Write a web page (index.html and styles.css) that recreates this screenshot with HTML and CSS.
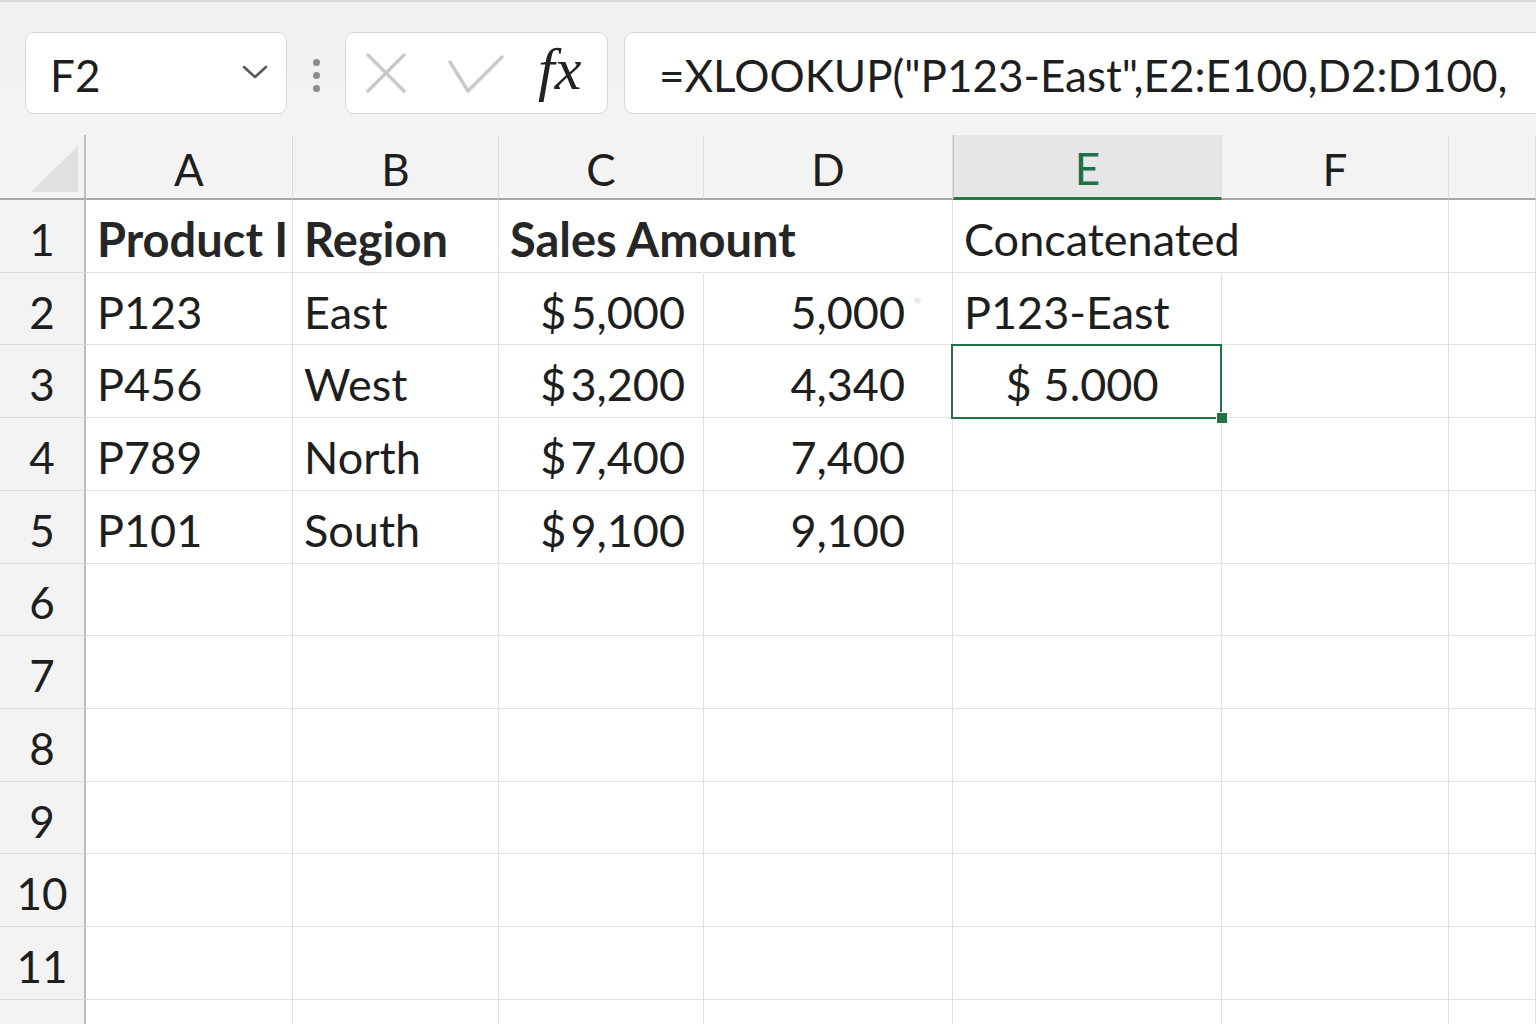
FILE: index.html
```html
<!DOCTYPE html>
<html>
<head>
<meta charset="utf-8">
<link rel="stylesheet" href="styles.css">
</head>
<body>
<div class="top">
  <div class="namebox">
    <span class="nbtext">F2</span>
    <svg class="chev" width="26" height="16" viewBox="0 0 26 16"><path d="M2 3 L13 13 L24 3" fill="none" stroke="#5a5a5a" stroke-width="2.6" stroke-linecap="round" stroke-linejoin="round"/></svg>
  </div>
  <div class="dots"><i></i><i></i><i></i></div>
  <div class="fxbox">
    <svg class="ic-x" width="40" height="40" viewBox="0 0 40 40"><path d="M2 2 L38 38 M38 2 L2 38" fill="none" stroke="#c9c9c9" stroke-width="3.4" stroke-linecap="round"/></svg>
    <svg class="ic-ok" width="56" height="38" viewBox="0 0 56 38"><path d="M2 7 L20 36 L54 2" fill="none" stroke="#c9c9c9" stroke-width="3.4" stroke-linecap="round" stroke-linejoin="round"/></svg>
    <span class="fx">fx</span>
  </div>
  <div class="formula">=XLOOKUP("P123-East",E2:E100,D2:D100,</div>
</div>
<div class="sheet">
  <div class="corner"><div class="tri"></div></div>
  <div class="ch">A</div>
  <div class="ch">B</div>
  <div class="ch">C</div>
  <div class="ch">D</div>
  <div class="ch chsel">E</div>
  <div class="ch">F</div>
  <div class="ch"></div>

  <div class="rh">1</div>
  <div class="c b">Product I</div>
  <div class="c b">Region</div>
  <div class="c b ov">Sales Amount</div>
  <div class="c"></div>
  <div class="c ov">Concatenated</div>
  <div class="c"></div>
  <div class="c"></div>

  <div class="rh">2</div>
  <div class="c">P123</div>
  <div class="c">East</div>
  <div class="c num"><span class="dl">$</span>5,000</div>
  <div class="c numd">5,000<span class="mark"></span></div>
  <div class="c">P123-East</div>
  <div class="c"></div>
  <div class="c"></div>

  <div class="rh">3</div>
  <div class="c">P456</div>
  <div class="c">West</div>
  <div class="c num"><span class="dl">$</span>3,200</div>
  <div class="c numd">4,340</div>
  <div class="c sel"><span class="dl2">$</span>5.000<span class="handle"></span></div>
  <div class="c"></div>
  <div class="c"></div>

  <div class="rh">4</div>
  <div class="c">P789</div>
  <div class="c">North</div>
  <div class="c num"><span class="dl">$</span>7,400</div>
  <div class="c numd">7,400</div>
  <div class="c"></div>
  <div class="c"></div>
  <div class="c"></div>

  <div class="rh">5</div>
  <div class="c">P101</div>
  <div class="c">South</div>
  <div class="c num"><span class="dl">$</span>9,100</div>
  <div class="c numd">9,100</div>
  <div class="c"></div>
  <div class="c"></div>
  <div class="c"></div>

  <div class="rh">6</div>
  <div class="c"></div><div class="c"></div><div class="c"></div><div class="c"></div><div class="c"></div><div class="c"></div><div class="c"></div>
  <div class="rh">7</div>
  <div class="c"></div><div class="c"></div><div class="c"></div><div class="c"></div><div class="c"></div><div class="c"></div><div class="c"></div>
  <div class="rh">8</div>
  <div class="c"></div><div class="c"></div><div class="c"></div><div class="c"></div><div class="c"></div><div class="c"></div><div class="c"></div>
  <div class="rh">9</div>
  <div class="c"></div><div class="c"></div><div class="c"></div><div class="c"></div><div class="c"></div><div class="c"></div><div class="c"></div>
  <div class="rh">10</div>
  <div class="c"></div><div class="c"></div><div class="c"></div><div class="c"></div><div class="c"></div><div class="c"></div><div class="c"></div>
  <div class="rh">11</div>
  <div class="c"></div><div class="c"></div><div class="c"></div><div class="c"></div><div class="c"></div><div class="c"></div><div class="c"></div>
  <div class="rh">12</div>
  <div class="c"></div><div class="c"></div><div class="c"></div><div class="c"></div><div class="c"></div><div class="c"></div><div class="c"></div>
</div>
</body>
</html>
```
FILE: styles.css
```css
* { box-sizing: border-box; }
html, body { margin: 0; }
body {
  width: 1536px;
  height: 1024px;
  overflow: hidden;
  background: #f3f3f3;
  font-family: Lato, "Open Sans", sans-serif;
  color: #1e1e1e;
}
.top {
  height: 135px;
  border-top: 2px solid #d9d9d9;
  padding-top: 30px;
  display: flex;
  align-items: flex-start;
  background: linear-gradient(#f0f0f0, #f4f4f4);
}
.namebox {
  flex: none;
  margin-left: 25px;
  width: 262px;
  height: 82px;
  background: #fff;
  border: 1px solid #d6d6d6;
  border-radius: 9px;
  display: flex;
  align-items: center;
  justify-content: space-between;
  padding: 4px 18px 0 24px;
  font-size: 44px;
}
.chev { margin-top: -6px; }
.dots {
  flex: none;
  width: 58px;
  display: flex;
  flex-direction: column;
  align-items: center;
  gap: 6px;
  padding-top: 27px;
}
.dots i {
  display: block;
  width: 7px;
  height: 7px;
  border-radius: 50%;
  background: #8c8c8c;
}
.fxbox {
  flex: none;
  width: 263px;
  height: 82px;
  background: #fff;
  border: 1px solid #d6d6d6;
  border-radius: 9px;
  display: flex;
  align-items: center;
  padding-left: 20px;
}
.ic-x { flex: none; }
.ic-ok { flex: none; margin-left: 42px; margin-top: 2px; }
.fx {
  margin-left: 34px;
  font-family: "Liberation Serif", "DejaVu Serif", serif;
  font-style: italic;
  font-size: 60px;
  color: #222;
  margin-top: -8px;
}
.formula {
  margin-left: 16px;
  flex: none;
  width: 960px;
  height: 82px;
  background: #fff;
  border: 1px solid #d6d6d6;
  border-radius: 9px;
  display: flex;
  align-items: center;
  padding: 4px 0 0 34px;
  font-size: 44px;
  white-space: nowrap;
}
.sheet {
  display: grid;
  grid-template-columns: 86px 207px 206px 205px 249px 269px 227px 87px;
  grid-template-rows: 65px repeat(12, 72.73px);
  background: #fff;
}
.corner {
  background: #f3f3f3;
  border-right: 2px solid #bdbdbd;
  border-bottom: 2px solid #a8a8a8;
  display: flex;
  align-items: flex-end;
  justify-content: flex-end;
  padding: 0 6px 6px 0;
}
.tri {
  width: 47px;
  height: 46px;
  background: #e0e0e0;
  clip-path: polygon(100% 0, 100% 100%, 0 100%);
}
.ch {
  background: #f3f3f3;
  border-right: 1px solid #dcdcdc;
  border-bottom: 2px solid #a8a8a8;
  display: flex;
  align-items: center;
  justify-content: center;
  font-size: 44px;
  padding-top: 4px;
}
.chsel {
  background: #e6e6e6;
  color: #1e7145;
  border-bottom: 3px solid #1e7b45;
  border-left: 1px solid #c6c6c6;
}
.rh {
  background: #f3f3f3;
  border-right: 2px solid #bdbdbd;
  border-bottom: 1px solid #dcdcdc;
  display: flex;
  align-items: center;
  justify-content: center;
  font-size: 44px;
  padding-top: 6px;
}
.c {
  border-right: 1px solid #e2e2e2;
  border-bottom: 1px solid #e2e2e2;
  display: flex;
  align-items: center;
  padding: 6px 0 0 11px;
  font-size: 45px;
  white-space: nowrap;
  position: relative;
}
.b { font-weight: 700; color: #262626; font-size: 47px; }
.ov { border-right-color: #fff; z-index: 1; }
.num { justify-content: flex-end; padding-right: 18px; }
.numd { justify-content: flex-end; padding-right: 47px; }
.dl { margin-right: 4px; }
.dl2 { margin-right: 12px; }
.mark {
  position: absolute;
  right: 31px;
  top: 24px;
  width: 7px;
  height: 7px;
  border-radius: 50%;
  background: #ececec;
}
.sel { justify-content: center; padding-left: 0; padding-right: 10px; z-index: 3; overflow: visible; }
.sel::after {
  content: "";
  position: absolute;
  left: -2px;
  top: -1px;
  right: -1px;
  bottom: -2px;
  border: 2px solid #217346;
  pointer-events: none;
  z-index: 1;
}
.handle {
  position: absolute;
  right: -6px;
  bottom: -6px;
  width: 10px;
  height: 10px;
  background: #217346;
  outline: 1px solid #ffffff;
  z-index: 5;
}
```
